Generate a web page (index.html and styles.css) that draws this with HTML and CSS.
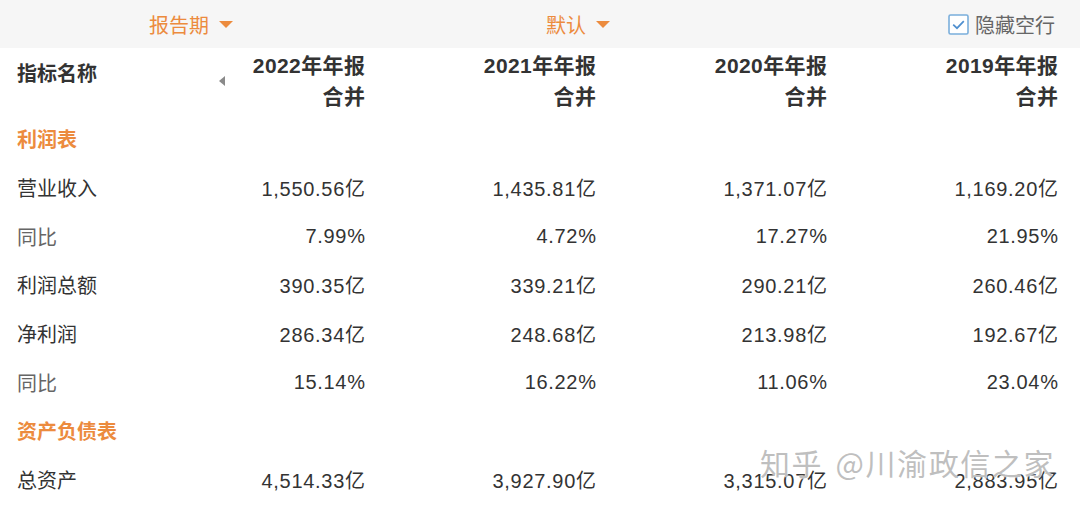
FILE: index.html
```html
<!DOCTYPE html>
<html lang="zh-CN">
<head>
<meta charset="utf-8">
<title>财务指标</title>
<link rel="stylesheet" href="styles.css">
</head>
<body>
<div class="page">
  <div class="topbar">
    <div class="drop drop-period">报告期<span class="caret"></span></div>
    <div class="drop drop-default">默认<span class="caret"></span></div>
    <div class="hide-empty">
      <svg class="checkbox" width="21" height="21" viewBox="0 0 21 21">
        <rect x="1" y="1" width="19" height="19" rx="1.5" fill="#fff" stroke="#7aaedb" stroke-width="1.6"/>
        <path d="M5.2 10.6 L9 14.2 L15.8 7.2" fill="none" stroke="#4f8fcf" stroke-width="1.7"/>
      </svg>
      <span>隐藏空行</span>
    </div>
  </div>

  <div class="table">
    <div class="row head">
      <div class="cell label head-label">指标名称<span class="sort-arrow"></span></div>
      <div class="cell num"><div>2022年年报</div><div>合并</div></div>
      <div class="cell num"><div>2021年年报</div><div>合并</div></div>
      <div class="cell num"><div>2020年年报</div><div>合并</div></div>
      <div class="cell num"><div>2019年年报</div><div>合并</div></div>
    </div>

    <div class="row section"><div class="cell label">利润表</div></div>

    <div class="row">
      <div class="cell label">营业收入</div>
      <div class="cell num">1,550.56亿</div>
      <div class="cell num">1,435.81亿</div>
      <div class="cell num">1,371.07亿</div>
      <div class="cell num">1,169.20亿</div>
    </div>
    <div class="row">
      <div class="cell label sub">同比</div>
      <div class="cell num">7.99%</div>
      <div class="cell num">4.72%</div>
      <div class="cell num">17.27%</div>
      <div class="cell num">21.95%</div>
    </div>
    <div class="row">
      <div class="cell label">利润总额</div>
      <div class="cell num">390.35亿</div>
      <div class="cell num">339.21亿</div>
      <div class="cell num">290.21亿</div>
      <div class="cell num">260.46亿</div>
    </div>
    <div class="row">
      <div class="cell label">净利润</div>
      <div class="cell num">286.34亿</div>
      <div class="cell num">248.68亿</div>
      <div class="cell num">213.98亿</div>
      <div class="cell num">192.67亿</div>
    </div>
    <div class="row">
      <div class="cell label sub">同比</div>
      <div class="cell num">15.14%</div>
      <div class="cell num">16.22%</div>
      <div class="cell num">11.06%</div>
      <div class="cell num">23.04%</div>
    </div>

    <div class="row section"><div class="cell label">资产负债表</div></div>

    <div class="row">
      <div class="cell label">总资产</div>
      <div class="cell num">4,514.33亿</div>
      <div class="cell num">3,927.90亿</div>
      <div class="cell num">3,315.07亿</div>
      <div class="cell num">2,883.95亿</div>
    </div>
  </div>

  <div class="watermark">知乎 @川渝政信之家</div>
</div>
</body>
</html>
```

FILE: styles.css
```css
* { box-sizing: border-box; }
html, body { margin: 0; padding: 0; background: #fff; }
body {
  font-family: "Liberation Sans", "Noto Sans CJK SC", sans-serif;
  font-size: 20px;
  color: #333;
}
.page {
  position: relative;
  width: 1080px;
  height: 506px;
  overflow: hidden;
}

/* top bar */
.topbar {
  height: 48px;
  background: #f6f6f6;
  display: flex;
  align-items: center;
  padding: 0 25px 0 149px;
}
.drop {
  color: #ec8b3e;
  display: flex;
  align-items: center;
  font-size: 20px;
}
.caret {
  display: inline-block;
  width: 0;
  height: 0;
  margin-left: 10px;
  border-left: 7px solid transparent;
  border-right: 7px solid transparent;
  border-top: 7px solid #ec8b3e;
}
.drop-default { margin-left: 313px; }
.hide-empty {
  margin-left: auto;
  display: flex;
  align-items: center;
  color: #666;
  font-size: 20px;
}
.checkbox { margin-right: 6px; }

/* table */
.table { padding: 0 22px 0 17px; }
.row {
  display: grid;
  grid-template-columns: 117px repeat(4, 231px);
  height: 48.7px;
  align-items: center;
}
.cell { white-space: nowrap; }
.num { text-align: right; letter-spacing: 0.7px; margin-right: -0.7px; }
.label { color: #333; }
.label.sub { color: #666; }

.row.head {
  height: 66.5px;
  align-items: start;
  padding-top: 2px;
  font-weight: bold;
  font-size: 21px;
  line-height: 31px;
  color: #333;
}
.row.head .num { letter-spacing: 0.4px; margin-right: -0.4px; }
.head-label {
  position: relative;
  font-size: 20px;
  padding-top: 9px;
}
.sort-arrow {
  position: absolute;
  left: 202px;
  top: 26px;
  width: 0;
  height: 0;
  border-top: 5px solid transparent;
  border-bottom: 5px solid transparent;
  border-right: 6px solid #8a8a8a;
}

.row.section .label {
  color: #ec8b3e;
  font-weight: bold;
  grid-column: 1 / 3;
}

.watermark {
  position: absolute;
  left: 760px;
  top: 440px;
  font-size: 30px;
  font-family: "Noto Sans CJK SC", sans-serif;
  color: rgba(170, 170, 170, 0.75);
  text-shadow: 0 0 1px #fff, 0 0 2px #fff;
  letter-spacing: 1.6px;
  word-spacing: 4px;
  white-space: nowrap;
}
```
